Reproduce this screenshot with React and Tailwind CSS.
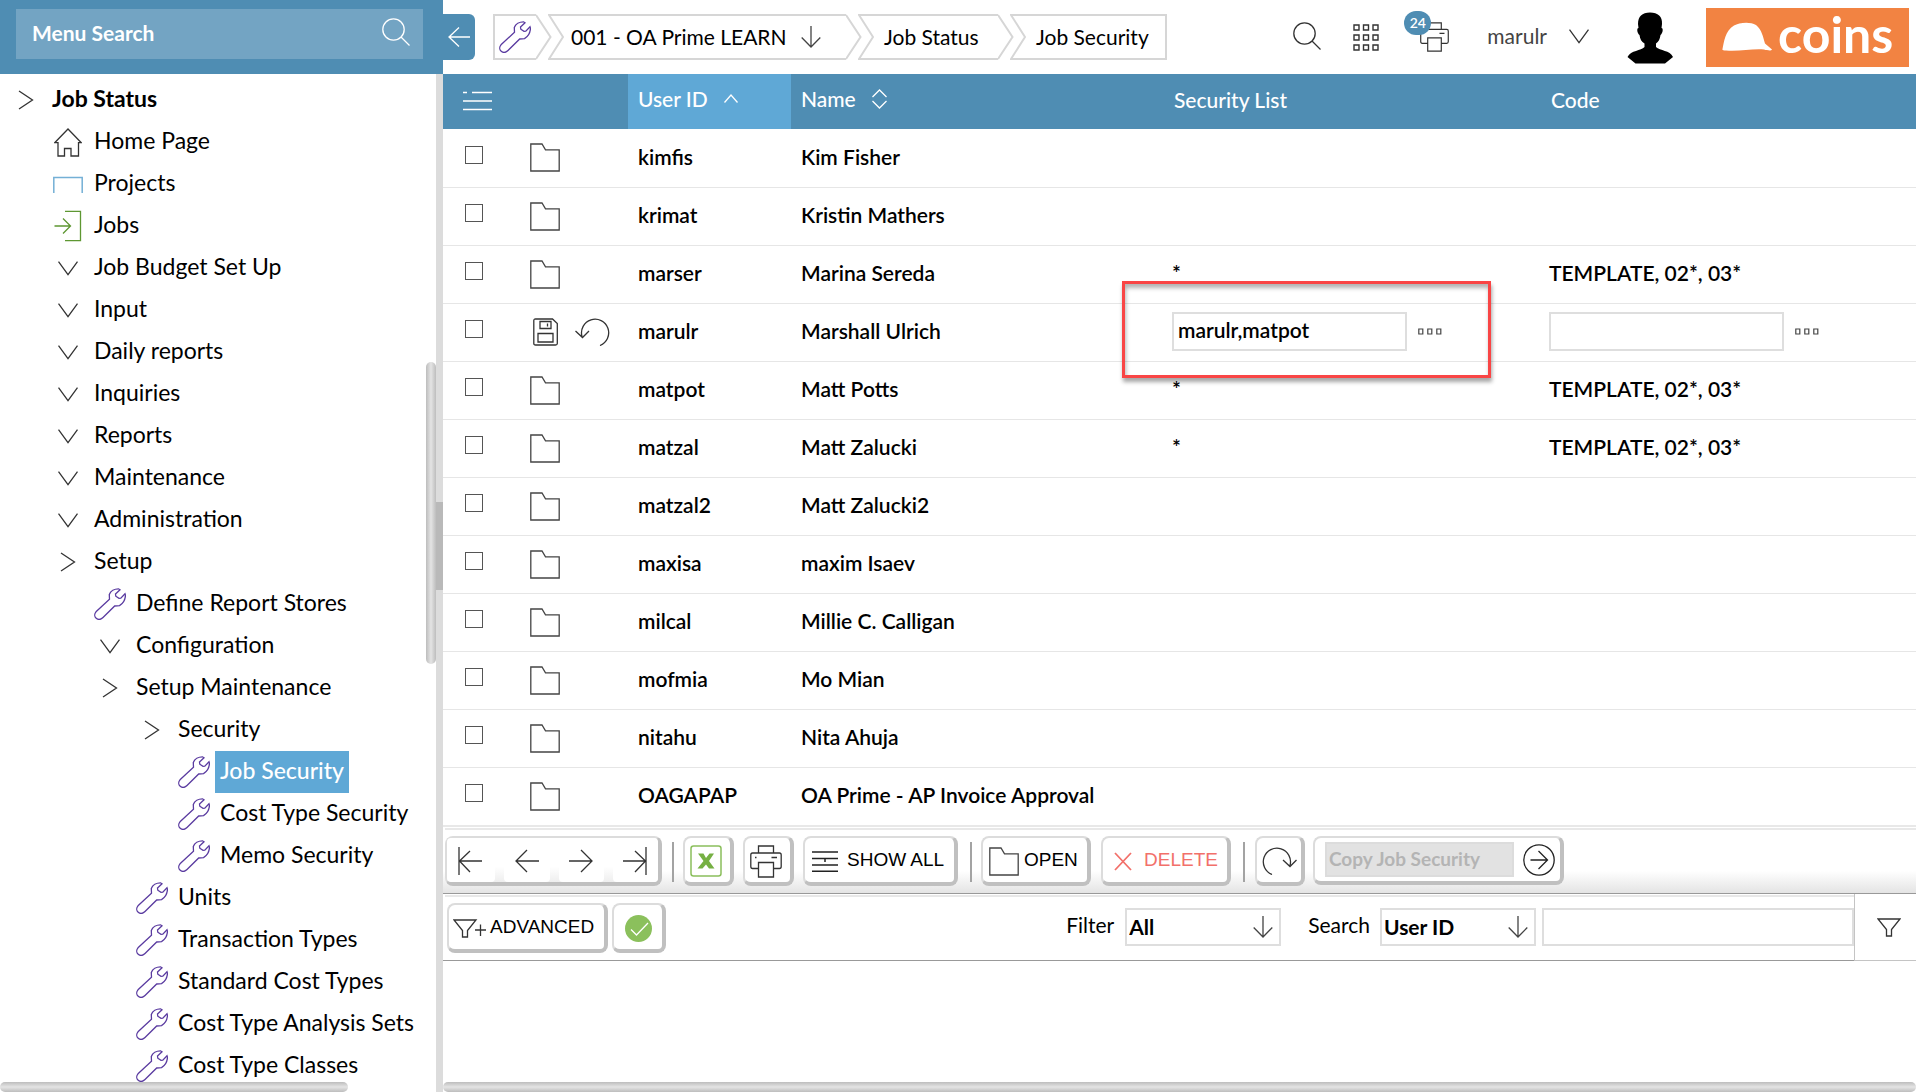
import React from "react";

function Svg({ w, h, className = "", sw = 1.3, children, vb }) {
  return (
    <svg
      width={w}
      height={h}
      viewBox={vb || `0 0 ${w} ${h}`}
      fill="none"
      stroke="currentColor"
      strokeWidth={sw}
      className={`block shrink-0 ${className}`}
      aria-hidden="true"
    >
      {children}
    </svg>
  );
}

const Wrench = () => (
  <Svg w={32} h={32} className="text-[#5a3ba0]">
    <path d="M24.5 .8C20.5 .8 16.500 3 15.300 6.500L15.500 11.200 2 23.800C.2 26 .4 28.800 2.200 30.300 4.200 31.900 7 31.500 9 29.500L20.700 18 25.500 17.600C29.300 15.500 31.200 12 31.500 7.300L31 5.800 26.800 10.200 25 10.400 21.800 8.200 21.500 6 26 1.800Z" />
  </Svg>
);
const Right = () => (
  <Svg w={16} h={20} className="text-[#333]"><path d="M1 1 14.500 10 1 19" /></Svg>
);
const Down = ({ className = "text-[#333]" }) => (
  <Svg w={20} h={15} className={className}><path d="M.5 .7 10 13.700 19.500 .7" /></Svg>
);
const Home = () => (
  <Svg w={28} h={29} className="text-[#333]">
    <path d="M.7 14.700 14 1 27.300 14.700H24.500V28H17V20.500H10.500V28H4V14.700Z" />
  </Svg>
);
const Projects = () => (
  <Svg w={30} h={17} sw={1.5} className="text-[#74b0d6]"><path d="M.8 17V1.500H29.200V17" /></Svg>
);
const Jobs = () => (
  <Svg w={28} h={32} className="text-[#5e9732]">
    <path d="M11 1.300H26.500V30.700H11M.5 16H16.500M9 8.500 16.500 16 9 23.500" />
  </Svg>
);
const Folder = () => (
  <Svg w={30} h={29} className="text-[#444]"><path d="M.8 1H12L15.500 6.800H29.200V28H.8Z" /></Svg>
);
const Magnifier = ({ className }) => (
  <Svg w={28} h={28} className={className}>
    <circle cx="11.500" cy="11.500" r="10.700" />
    <path d="M19 19 27.500 27.500" />
  </Svg>
);
const ArrowDown = ({ className = "text-[#444]" }) => (
  <Svg w={20} h={22} className={className}><path d="M10 0V21M.7 11.500 10 21 19.300 11.500" /></Svg>
);
const Printer = () => (
  <Svg w={32} h={33} className="text-[#333]">
    <path d="M8.500 8V1H23.500V8M8.500 23.500H2.500Q.8 23.500 .8 21.500V10Q.8 8 2.500 8H29.500Q31.200 8 31.200 10V21.500Q31.200 23.500 29.500 23.500H23.500M8.500 17.500H23.500V32H8.500ZM21.500 12.500H27M5 12.500H6.500" />
  </Svg>
);
const Funnel = () => (
  <Svg w={24} h={19} className="text-[#333]"><path d="M1 1H23L14.500 11.500V18H9.500V11.500Z" /></Svg>
);
const Dots = () => (
  <Svg w={24} h={7} sw={1.2} className="text-[#444]">
    <path d="M.8 1H4.800V6H.8ZM9.800 1H13.800V6H9.800ZM18.800 1H22.800V6H18.800Z" />
  </Svg>
);

const icons = { right: Right, down: Down, home: Home, projects: Projects, jobs: Jobs, wrench: Wrench };

const tree = [
  [0, "right", "Job Status"],
  [1, "home", "Home Page"],
  [1, "projects", "Projects"],
  [1, "jobs", "Jobs"],
  [1, "down", "Job Budget Set Up"],
  [1, "down", "Input"],
  [1, "down", "Daily reports"],
  [1, "down", "Inquiries"],
  [1, "down", "Reports"],
  [1, "down", "Maintenance"],
  [1, "down", "Administration"],
  [1, "right", "Setup"],
  [2, "wrench", "Define Report Stores"],
  [2, "down", "Configuration"],
  [2, "right", "Setup Maintenance"],
  [3, "right", "Security"],
  [4, "wrench", "Job Security", true],
  [4, "wrench", "Cost Type Security"],
  [4, "wrench", "Memo Security"],
  [3, "wrench", "Units"],
  [3, "wrench", "Transaction Types"],
  [3, "wrench", "Standard Cost Types"],
  [3, "wrench", "Cost Type Analysis Sets"],
  [3, "wrench", "Cost Type Classes"],
];

const indent = ["pl-[5px]", "pl-[47px]", "pl-[89px]", "pl-[131px]", "pl-[173px]"];

function Sidebar() {
  return (
    <aside className="flex w-[443px] shrink-0 flex-col">
      <div className="h-[74px] shrink-0 bg-[#4f8db3] pt-[9px] pr-5 pl-4">
        <div className="flex h-[50px] items-center bg-[#73a4c3] pr-[13px] pl-4">
          <input
            type="text"
            aria-label="Menu Search"
            placeholder="Menu Search"
            className="h-full min-w-0 flex-1 bg-transparent pb-1 text-[21px] font-bold text-white outline-none placeholder:text-white placeholder:opacity-100"
          />
          <button type="button" aria-label="Search menu" className="pb-1">
            <Magnifier className="text-white" />
          </button>
        </div>
      </div>
      <div className="flex min-h-0 flex-1">
        <nav className="relative min-w-0 flex-1 overflow-hidden pt-[5px]">
          <ul>
            {tree.map(([level, icon, label, active]) => {
              const Icon = icons[icon];
              return (
                <li key={label} className={`flex h-[42px] ${indent[level]}`}>
                  <span className="flex w-[42px] shrink-0 items-center justify-center">
                    <Icon />
                  </span>
                  <a
                    href="#"
                    className={`px-[5px] pb-1 text-[23px] leading-[38px] whitespace-nowrap ${
                      active ? "bg-[#5fa8d6] font-medium text-white" : level === 0 ? "font-bold text-black" : "text-black"
                    }`}
                  >
                    {label}
                  </a>
                </li>
              );
            })}
          </ul>
          <div className="absolute top-[288px] right-0 h-[302px] w-[10px] rounded-full bg-linear-to-r from-[#bdbdbd] via-[#e4e4e4] to-[#bdbdbd]" />
          <div className="absolute bottom-0 left-0 h-[10px] w-[348px] rounded-full bg-linear-to-b from-[#bdbdbd] via-[#e4e4e4] to-[#bdbdbd]" />
        </nav>
        <div className="w-[7px] shrink-0 bg-[#dcdcdc] pt-[428px]">
          <div className="h-[88px] bg-[#b9b9b9]" />
        </div>
      </div>
    </aside>
  );
}

const Tip = () => (
  <Svg w={16} h={46} sw={2} className="text-[#d6d6d6]"><path d="M0 1 14.500 23 0 45" /></Svg>
);
const Notch = () => (
  <Svg w={16} h={46} sw={2} className="text-[#d6d6d6]"><path d="M16 1H1L15 23 1 45H16" /></Svg>
);

function Crumb({ first, last, className = "", children }) {
  return (
    <li className={`flex ${first ? "" : "-ml-1"}`}>
      {!first && <Notch />}
      <span
        className={`flex h-[46px] items-center border-y-2 border-[#d6d6d6] text-[21px] whitespace-nowrap text-black ${
          first ? "border-l-2" : ""
        } ${last ? "border-r-2" : ""} ${className}`}
      >
        {children}
      </span>
      {!last && <Tip />}
    </li>
  );
}

function TopBar() {
  return (
    <header className="flex h-[74px] shrink-0">
      <button
        type="button"
        aria-label="Collapse menu"
        className="mt-[14px] flex h-[46px] w-8 items-center justify-center rounded-r-md bg-[#4f8db3] text-white"
      >
        <Svg w={22} h={20}><path d="M22 10H1M11 .5 1 10 11 19.500" /></Svg>
      </button>
      <ol className="mt-[14px] ml-[18px] flex">
        <Crumb first className="w-[43px] pl-1"><a href="#" aria-label="Setup"><Wrench /></a></Crumb>
        <Crumb className="w-[282px] justify-between pr-[25px] pl-[7px]">
          <a href="#">001 - OA Prime LEARN</a>
          <ArrowDown />
        </Crumb>
        <Crumb className="w-[124px] pl-[10px]"><a href="#">Job Status</a></Crumb>
        <Crumb last className="w-[141px] pl-[10px]"><a href="#">Job Security</a></Crumb>
      </ol>
      <div className="ml-auto flex items-center pb-[14px]">
        <button type="button" aria-label="Search" className="mr-8 pt-3">
          <Magnifier className="text-[#333]" />
        </button>
        <button type="button" aria-label="Applications" className="mr-[25px] pt-[14px]">
          <Svg w={26} h={27} sw={1.4} className="text-[#333]">
            <path d="M1 1H6V6H1ZM10.500 1H15.500V6H10.500ZM20 1H25V6H20ZM1 11H6V16H1ZM10.500 11H15.500V16H10.500ZM20 11H25V16H20ZM1 21H6V26H1ZM10.500 21H15.500V26H10.500ZM20 21H25V26H20Z" />
          </Svg>
        </button>
        <button type="button" aria-label="Print queue, 24 items" className="relative mr-[38px] pt-[14px] pl-4">
          <Svg w={29} h={30} className="text-[#333]" vb="0 0 32 33">
            <path d="M8.500 8V1H23.500V8M8.500 23.500H2.500Q.8 23.500 .8 21.500V10Q.8 8 2.500 8H29.500Q31.200 8 31.200 10V21.500Q31.200 23.500 29.500 23.500H23.500M8.500 17.500H23.500V32H8.500ZM21.500 12.500H27" />
          </Svg>
          <span className="absolute top-[3px] left-0 flex h-6 w-[27px] items-center justify-center rounded-full bg-[#4f8db3] text-sm font-semibold text-white">
            24
          </span>
        </button>
        <button type="button" className="mr-[38px] flex items-center gap-[22px] pt-3 text-[21px] text-[#444]">
          marulr
          <Down />
        </button>
        <svg width="46" height="52" viewBox="0 0 46 52" className="mt-4 mr-[33px] block" role="img" aria-label="User avatar">
          <path
            d="M23 .5C31 .5 35.500 4.500 35 12L34.500 16C36.500 16 36 21 33.500 23 33 27 31.500 30 29 31.500V35C33 39 43 38 46 45L38 51.500H8.500L.5 45C4 38 14 39 17.500 35V31.500C14.500 30 13 27 12.500 23 10 21 9.500 16 11.500 16L11 12C11 4.500 15 .5 23 .5Z"
            fill="#000"
          />
        </svg>
        <a href="#" aria-label="coins" className="mt-[14px] mr-[7px] flex h-[59px] w-[203px] items-center bg-[#f28342] pl-4 text-white">
          <svg width="50" height="30" viewBox="0 0 50 30" className="block shrink-0" aria-hidden="true">
            <path d="M.5 27C2 20 3 9 12 3.500 17 .5 28 -.8 34 3 40 8 41 15 43 21.500L50 27.500C49 29 46 28.500 42 27.500 30 26.500 18 29.500 4 28.500 1.500 28.500 0 28.300 .5 27Z" fill="#fff" />
          </svg>
          <span className="ml-[6px] pb-[6px] text-[50px] leading-none font-bold">coins</span>
        </a>
      </div>
    </header>
  );
}

const rows = [
  ["kimfis", "Kim Fisher"],
  ["krimat", "Kristin Mathers"],
  ["marser", "Marina Sereda", "*", "TEMPLATE, 02*, 03*"],
  ["marulr", "Marshall Ulrich"],
  ["matpot", "Matt Potts", "*", "TEMPLATE, 02*, 03*"],
  ["matzal", "Matt Zalucki", "*", "TEMPLATE, 02*, 03*"],
  ["matzal2", "Matt Zalucki2"],
  ["maxisa", "maxim Isaev"],
  ["milcal", "Millie C. Calligan"],
  ["mofmia", "Mo Mian"],
  ["nitahu", "Nita Ahuja"],
  ["OAGAPAP", "OA Prime - AP Invoice Approval"],
];

function EditField({ label, value }) {
  return (
    <div className="flex items-center gap-[11px]">
      <input
        type="text"
        aria-label={label}
        defaultValue={value}
        className="h-[39px] w-[235px] border-2 border-[#dedede] bg-white px-1 pb-1 font-semibold text-black outline-none"
      />
      <button type="button" aria-label={`Choose ${label}`}><Dots /></button>
    </div>
  );
}

function UserTable() {
  return (
    <table className="w-full table-fixed border-collapse text-left text-[21px] text-black">
      <colgroup>
        <col className="w-[79px]" />
        <col className="w-[106px]" />
        <col className="w-[163px]" />
        <col className="w-[373px]" />
        <col className="w-[377px]" />
        <col />
      </colgroup>
      <thead>
        <tr className="h-[55px] bg-[#4f8db3] text-white">
          <th className="p-0 pb-[2px] pl-5 font-medium">
            <button type="button" aria-label="Table options" className="block">
              <Svg w={29} h={20} sw={1.4}><path d="M0 1.500H4M9 1.500H29M0 10H29M0 18.500H29" /></Svg>
            </button>
          </th>
          <th aria-label="Actions" />
          <th className="bg-[#5fa8d6] p-0 pl-[10px] font-medium">
            <button type="button" className="flex items-center gap-4 pb-[6px]">
              User ID
              <Svg w={14} h={9}><path d="M.5 8.500 7 1 13.500 8.500" /></Svg>
            </button>
          </th>
          <th className="p-0 pl-[10px] font-medium">
            <button type="button" className="flex items-center gap-4 pb-[6px]">
              Name
              <Svg w={15} h={20}><path d="M.5 8 7.500 1 14.500 8M.5 12 7.500 19 14.500 12" /></Svg>
            </button>
          </th>
          <th className="p-0 pb-1 pl-[10px] font-medium">Security List</th>
          <th className="p-0 pb-1 pl-[10px] font-medium">Code</th>
        </tr>
      </thead>
      <tbody>
        {rows.map(([id, name, list, code]) => (
          <tr key={id} className="h-[58px] border-b border-[#e6e6e6] font-semibold last:border-b-0">
            <td className="p-0 pb-[6px] pl-[22px]">
              <input type="checkbox" aria-label={`Select ${id}`} className="block size-[18px] appearance-none border border-[#555] bg-white" />
            </td>
            <td className="p-0 pl-2">
              {id === "marulr" ? (
                <div className="flex items-center gap-[17px] text-[#333]">
                  <button type="button" aria-label="Save" className="pl-[3px]">
                    <Svg w={25} h={28}>
                      <path d="M2.500 1H19.500L24.300 5.500V25.500Q24.300 27 22.500 27H2.500Q.8 27 .8 25.500V2.500Q.8 1 2.500 1ZM7 3.500H18V10.500H7ZM14.500 5.500V8.500M5 15.500H20V24H5Z" />
                    </Svg>
                  </button>
                  <button type="button" aria-label="Undo">
                    <Svg w={35} h={28}><path d="M25 27.500A13.600 13.600 0 1 0 7 18.500M.5 13 7.500 19.500 14 13" /></Svg>
                  </button>
                </div>
              ) : (
                <button type="button" aria-label={`Open ${id}`} className="block"><Folder /></button>
              )}
            </td>
            <td className="p-0 pb-[3px] pl-[10px]">{id}</td>
            <td className="p-0 pb-[3px] pl-[10px]">{name}</td>
            {id === "marulr" ? (
              <>
                <td className="relative p-0 pb-px pl-2">
                  <EditField label="Security List" value="marulr,matpot" />
                  <div className="pointer-events-none absolute top-[-23px] left-[-42px] h-[97px] w-[369px] border-3 border-[#f94545] shadow-[1px_4px_4px_rgba(0,0,0,0.35),inset_1px_4px_4px_rgba(0,0,0,0.3)]" />
                </td>
                <td className="p-0 pb-px pl-2"><EditField label="Code" value="" /></td>
              </>
            ) : (
              <>
                <td className="p-0 pb-[3px] pl-2">{list}</td>
                <td className="p-0 pb-[3px] pl-2">{code}</td>
              </>
            )}
          </tr>
        ))}
      </tbody>
    </table>
  );
}

function ToolButton({ className = "", label, children }) {
  return (
    <button
      type="button"
      aria-label={label}
      className={`flex h-[50px] shrink-0 items-center rounded-lg border-t-2 border-r-4 border-b-4 border-l-2 border-t-[#dcdcdc] border-r-[#c0c0c0] border-b-[#c0c0c0] border-l-[#dcdcdc] bg-white pt-[2px] font-[Liberation_Sans,sans-serif] text-[19px] text-black ${className}`}
    >
      {children}
    </button>
  );
}

const Separator = ({ className = "" }) => <div className={`h-10 w-[2px] shrink-0 bg-[#a3a3a3] ${className}`} />;

const navIcons = [
  ["First page", "M1 0V28M24 14H1M12 4 1.500 14 12 25"],
  ["Previous page", "M24 14H1M12 3 1 14 12 25"],
  ["Next page", "M0 14H23M12 3 23 14 12 25"],
  ["Last page", "M23 0V28M0 14H23M12 4 22.500 14 12 25"],
];

function Toolbar() {
  return (
    <div className="flex h-[64px] items-start border-b border-[#999] bg-linear-to-b from-white from-65% to-[#e4e4e4] pt-[6px] pl-[2px]">
      <div className="flex h-[50px] w-[217px] gap-[9px] rounded-lg border-t-2 border-r-4 border-b-4 border-l-2 border-t-[#dcdcdc] border-r-[#c0c0c0] border-b-[#c0c0c0] border-l-[#dcdcdc] bg-linear-to-b from-white from-65% to-[#eee]">
        {navIcons.map(([label, d]) => (
          <button key={label} type="button" aria-label={label} className="flex flex-1 items-center justify-center rounded-sm bg-white pt-[2px] first:pr-[3px]">
            <Svg w={24} h={28} className="text-[#333]"><path d={d} /></Svg>
          </button>
        ))}
      </div>
      <Separator className="mr-[9px] ml-[10px] mt-[6px]" />
      <ToolButton label="Export to Excel" className="w-[51px] justify-center pr-1">
        <Svg w={32} h={32} sw={1.5} className="text-[#8bbf5c]">
          <rect x="1" y="1" width="30" height="30" rx="2.500" />
          <path d="M8 8.500H13.500L16 13 19.500 8.500H24L19 16 24.500 23.500H19L16 19.500 12.500 23.500H7.500L13.500 16Z" fill="#76b043" stroke="none" />
        </Svg>
      </ToolButton>
      <ToolButton label="Print" className="ml-[9px] w-[51px] justify-center pr-1"><Printer /></ToolButton>
      <ToolButton className="ml-[9px] w-[155px] gap-[9px] pl-[7px]">
        <Svg w={26} h={21} sw={1.5} className="text-[#222]"><path d="M0 1H26M0 7.500H26M0 14H26M0 20.200H26M13 8V11" /></Svg>
        <span className="pb-[2px]">SHOW ALL</span>
      </ToolButton>
      <Separator className="mr-[9px] ml-3 mt-[6px]" />
      <ToolButton className="w-[110px] gap-[5px] pl-[6px]">
        <Folder />
        <span className="pb-[2px]">OPEN</span>
      </ToolButton>
      <ToolButton className="ml-[10px] w-[130px] gap-3 pl-[11px]">
        <Svg w={18} h={19} sw={1.8} className="text-[#f2706a]"><path d="M1 1 17 18M17 1 1 18" /></Svg>
        <span className="pb-[2px] text-[#f2706a]">DELETE</span>
      </ToolButton>
      <Separator className="mr-[10px] ml-3 mt-[6px]" />
      <ToolButton label="Refresh" className="w-[50px] justify-center">
        <Svg w={35} h={28} className="text-[#333]"><path d="M10 27.500A13.600 13.600 0 1 1 28 18.500M34.500 13 28 19.500 21 13" /></Svg>
      </ToolButton>
      <div className="ml-2 flex h-[49px] w-[251px] items-center rounded-lg border-t-2 border-r-4 border-b-4 border-l-2 border-t-[#dcdcdc] border-r-[#c0c0c0] border-b-[#c0c0c0] border-l-[#dcdcdc] bg-white pl-[10px]">
        <input
          type="text"
          disabled
          aria-label="Copy Job Security"
          defaultValue="Copy Job Security"
          className="h-[35px] w-[189px] border-2 border-[#dcdcdc] bg-[#e2e2e2] pb-[2px] pl-[2px] text-[19px] font-bold text-[#b4b4b4]"
        />
        <button type="button" aria-label="Copy" className="ml-[9px]">
          <Svg w={32} h={32} className="text-[#222]"><circle cx="16" cy="16" r="15.200" /><path d="M7.500 16H24.500M15.500 7 24.500 16 15.500 25" /></Svg>
        </button>
      </div>
    </div>
  );
}

function Select({ id, value, options }) {
  return (
    <div className="relative">
      <select id={id} defaultValue={value} className="block h-[38px] w-[156px] appearance-none border-2 border-[#dedede] bg-white pl-[2px] text-[21px] font-bold text-black outline-none">
        {options.map((o) => <option key={o}>{o}</option>)}
      </select>
      <div className="pointer-events-none absolute top-2 right-2"><ArrowDown /></div>
    </div>
  );
}

function FilterBar() {
  return (
    <div className="flex h-[67px]">
      <div className="flex min-w-0 flex-1 flex-col border-b border-[#999]">
        <div className="mt-px ml-[2px] h-[2px] bg-[#e8e8e8]" />
        <div className="flex items-start pt-[6px] pl-1">
          <ToolButton className="w-[161px] gap-1 pl-1">
            <Svg w={33} h={19} className="text-[#333]"><path d="M1 1H23L14.500 11.500V18H9.500V11.500ZM22 11H33M27.500 5.500V17" /></Svg>
            <span className="pb-[2px]">ADVANCED</span>
          </ToolButton>
          <ToolButton label="Apply" className="ml-1 w-[54px] justify-center">
            <Svg w={27} h={27}><circle cx="13.500" cy="13.500" r="13.500" fill="#8bc05c" stroke="none" /><path d="M6 14.500 11.500 20 23 8" stroke="#fff" /></Svg>
          </ToolButton>
          <div className="ml-auto flex items-center pt-[5px] text-[21px] text-black">
            <label htmlFor="filter" className="mr-[11px] pb-1">Filter</label>
            <Select id="filter" value="All" options={["All"]} />
            <label htmlFor="search-by" className="mr-[10px] ml-[27px] pb-1">Search</label>
            <Select id="search-by" value="User ID" options={["User ID", "Name"]} />
            <input type="text" aria-label="Search text" className="ml-[6px] h-[38px] w-[312px] border-2 border-[#dedede] bg-white px-1 outline-none" />
          </div>
        </div>
      </div>
      <button type="button" aria-label="Filter" className="flex w-[62px] items-center justify-center border-b border-l border-[#c4c4c4] bg-white pl-[6px]">
        <Funnel />
      </button>
    </div>
  );
}

export default function App() {
  return (
    <div className="flex h-screen overflow-hidden bg-white font-[Lato,sans-serif]">
      <Sidebar />
      <main className="flex min-w-0 flex-1 flex-col">
        <TopBar />
        <UserTable />
        <div className="h-[2px] shrink-0 bg-[#e8e8e8]" />
        <div className="mt-px ml-[2px] h-[2px] shrink-0 bg-[#e8e8e8]" />
        <Toolbar />
        <FilterBar />
        <div className="mt-auto h-[10px] shrink-0 rounded-full bg-linear-to-b from-[#bdbdbd] via-[#e4e4e4] to-[#bdbdbd]" />
      </main>
    </div>
  );
}
